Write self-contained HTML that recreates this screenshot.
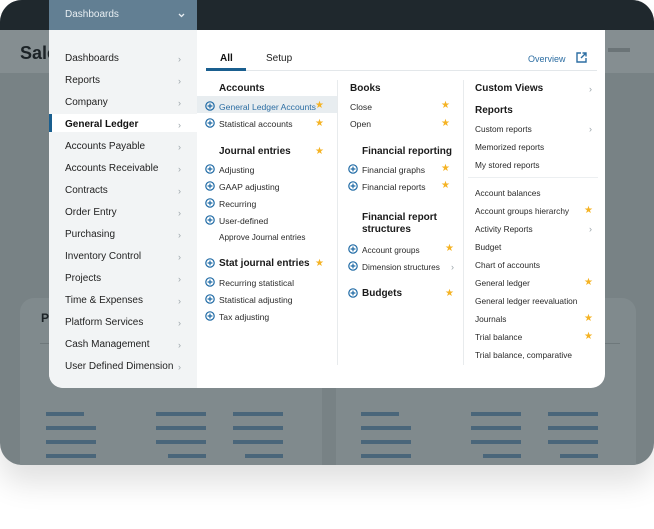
<!DOCTYPE html>
<html><head><style>
*{margin:0;padding:0;box-sizing:border-box}
body{width:654px;height:529px;background:#fff;font-family:"Liberation Sans",sans-serif;position:relative;overflow:hidden}
.wrap{position:absolute;left:0;top:0;width:654px;height:465px;border-radius:22px;background:#788285;overflow:hidden;box-shadow:0 18px 30px rgba(0,0,0,.12)}
.top{position:absolute;left:0;top:0;width:654px;height:30px;background:#1f282d}
.band{position:absolute;left:0;top:30px;width:654px;height:43px;background:#858e91}
.card{position:absolute;top:298px;height:180px;background:#808a8d;border-radius:14px}
.bar{position:absolute;height:4px;background:#4a667a}
.a{position:absolute;white-space:nowrap;line-height:1;margin-top:2px}
.nav{position:absolute;left:49px;top:30px;width:148px;height:358px;background:#f2f4f5;border-bottom-left-radius:14px}
.menu{position:absolute;left:49px;top:30px;width:556px;height:358px;background:#fff;border-radius:0 0 14px 14px;overflow:hidden}
.n{font-size:10px;color:#222;left:65px}
.ch{position:absolute;left:178px;font-size:9px;color:#9aa3a8;margin-top:2px}
.h{font-weight:bold;font-size:10px;color:#1a1a1a}
.i{font-size:8.6px;color:#2a2a2a}
.s{position:absolute;font-size:10px;color:#f5b324;line-height:1;margin-top:3px}
.p{position:absolute;width:10px;height:10px;margin-top:1px}
</style></head><body>
<div class="wrap">
<div class="top"></div>
<div class="band"></div>
<div class="a" style="left:20px;top:42px;font-size:18px;font-weight:bold;color:#1c2327">Sales</div>
<div style="position:absolute;left:608px;top:48px;width:22px;height:4px;background:#6b7477"></div>
<div class="card" style="left:20px;width:302px"></div>
<div class="card" style="left:336px;width:300px"></div>
<div class="a" style="left:41px;top:310px;font-size:12px;font-weight:bold;color:#1c2327">P</div>
<div style="position:absolute;left:40px;top:343px;width:580px;height:1px;background:#6e787b"></div>
<div class="bar" style="left:46px;top:412px;width:38px"></div><div class="bar" style="left:156px;top:412px;width:50px"></div><div class="bar" style="left:233px;top:412px;width:50px"></div>
<div class="bar" style="left:46px;top:426px;width:50px"></div><div class="bar" style="left:156px;top:426px;width:50px"></div><div class="bar" style="left:233px;top:426px;width:50px"></div>
<div class="bar" style="left:46px;top:440px;width:50px"></div><div class="bar" style="left:156px;top:440px;width:50px"></div><div class="bar" style="left:233px;top:440px;width:50px"></div>
<div class="bar" style="left:46px;top:454px;width:50px"></div><div class="bar" style="left:168px;top:454px;width:38px"></div><div class="bar" style="left:245px;top:454px;width:38px"></div>
<div class="bar" style="left:361px;top:412px;width:38px"></div><div class="bar" style="left:471px;top:412px;width:50px"></div><div class="bar" style="left:548px;top:412px;width:50px"></div>
<div class="bar" style="left:361px;top:426px;width:50px"></div><div class="bar" style="left:471px;top:426px;width:50px"></div><div class="bar" style="left:548px;top:426px;width:50px"></div>
<div class="bar" style="left:361px;top:440px;width:50px"></div><div class="bar" style="left:471px;top:440px;width:50px"></div><div class="bar" style="left:548px;top:440px;width:50px"></div>
<div class="bar" style="left:361px;top:454px;width:50px"></div><div class="bar" style="left:483px;top:454px;width:38px"></div><div class="bar" style="left:560px;top:454px;width:38px"></div>
</div>

<div style="position:absolute;left:49px;top:0;width:148px;height:30px;background:#627f93"></div>
<div class="a" style="left:65px;top:8px;font-size:10px;color:#e8eef2">Dashboards</div>
<svg style="position:absolute;left:178px;top:13px" width="7" height="5" viewBox="0 0 7 5"><path d="M1 1l2.5 2.5L6 1" stroke="#e8eef2" stroke-width="1.3" fill="none"/></svg>

<div class="menu"></div>
<div class="nav"></div>
<div style="position:absolute;left:49px;top:114px;width:148px;height:18px;background:#fff"></div>
<div style="position:absolute;left:49px;top:114px;width:3px;height:18px;background:#1a5f8f"></div>
<div class="a n" style="top:52px">Dashboards</div><div class="ch" style="top:52px">›</div>
<div class="a n" style="top:74px">Reports</div><div class="ch" style="top:74px">›</div>
<div class="a n" style="top:96px">Company</div><div class="ch" style="top:96px">›</div>
<div class="a n" style="top:118px;font-weight:bold;color:#111">General Ledger</div><div class="ch" style="top:118px">›</div>
<div class="a n" style="top:140px">Accounts Payable</div><div class="ch" style="top:140px">›</div>
<div class="a n" style="top:162px">Accounts Receivable</div><div class="ch" style="top:162px">›</div>
<div class="a n" style="top:184px">Contracts</div><div class="ch" style="top:184px">›</div>
<div class="a n" style="top:206px">Order Entry</div><div class="ch" style="top:206px">›</div>
<div class="a n" style="top:228px">Purchasing</div><div class="ch" style="top:228px">›</div>
<div class="a n" style="top:250px">Inventory Control</div><div class="ch" style="top:250px">›</div>
<div class="a n" style="top:272px">Projects</div><div class="ch" style="top:272px">›</div>
<div class="a n" style="top:294px">Time &amp; Expenses</div><div class="ch" style="top:294px">›</div>
<div class="a n" style="top:316px">Platform Services</div><div class="ch" style="top:316px">›</div>
<div class="a n" style="top:338px">Cash Management</div><div class="ch" style="top:338px">›</div>
<div class="a n" style="top:360px">User Defined Dimension</div><div class="ch" style="top:360px">›</div>

<div class="a" style="left:220px;top:52px;font-size:10px;font-weight:bold;color:#111">All</div>
<div class="a" style="left:266px;top:52px;font-size:10px;color:#222">Setup</div>
<div style="position:absolute;left:206px;top:70px;width:391px;height:1px;background:#e3e7ea"></div>
<div style="position:absolute;left:206px;top:68px;width:40px;height:3px;background:#1a5f8f"></div>
<div class="a" style="left:528px;top:53px;font-size:9px;color:#2d6ea3">Overview</div>
<svg style="position:absolute;left:576px;top:52px" width="11" height="11" viewBox="0 0 11 11"><path d="M5 1H1v9h9V6M6.5 1H10v3.5M10 1L5 6" stroke="#2d6ea3" stroke-width="1.4" fill="none"/></svg>

<div style="position:absolute;left:337px;top:80px;width:1px;height:285px;background:#e8ebed"></div>
<div style="position:absolute;left:463px;top:80px;width:1px;height:285px;background:#e8ebed"></div>
<div style="position:absolute;left:197px;top:96px;width:140px;height:17px;background:#e8edf0"></div>

<svg width="0" height="0" style="position:absolute"><defs><symbol id="pl" viewBox="0 0 10 10"><circle cx="5" cy="5" r="4.2" stroke="#1f6aa5" stroke-width="1.2" fill="none"/><path d="M5 2.6v4.8M2.6 5h4.8" stroke="#1f6aa5" stroke-width="1.2"/></symbol></defs></svg>

<div class="a h" style="left:219px;top:82px">Accounts</div>
<svg class="p" style="left:205px;top:100px"><use href="#pl"/></svg><div class="a i" style="left:219px;top:101px;color:#2d6ea3">General Ledger Accounts</div><div class="s" style="left:315px;top:98px">★</div>
<svg class="p" style="left:205px;top:117px"><use href="#pl"/></svg><div class="a i" style="left:219px;top:118px">Statistical accounts</div><div class="s" style="left:315px;top:116px">★</div>
<div class="a h" style="left:219px;top:145px">Journal entries</div><div class="s" style="left:315px;top:144px">★</div>
<svg class="p" style="left:205px;top:163px"><use href="#pl"/></svg><div class="a i" style="left:219px;top:164px">Adjusting</div>
<svg class="p" style="left:205px;top:180px"><use href="#pl"/></svg><div class="a i" style="left:219px;top:181px">GAAP adjusting</div>
<svg class="p" style="left:205px;top:197px"><use href="#pl"/></svg><div class="a i" style="left:219px;top:198px">Recurring</div>
<svg class="p" style="left:205px;top:214px"><use href="#pl"/></svg><div class="a i" style="left:219px;top:215px">User-defined</div>
<div class="a i" style="left:219px;top:232px;font-size:8.2px">Approve Journal entries</div>
<svg class="p" style="left:205px;top:257px"><use href="#pl"/></svg><div class="a h" style="left:219px;top:257px">Stat journal entries</div><div class="s" style="left:315px;top:256px">★</div>
<svg class="p" style="left:205px;top:276px"><use href="#pl"/></svg><div class="a i" style="left:219px;top:277px">Recurring statistical</div>
<svg class="p" style="left:205px;top:293px"><use href="#pl"/></svg><div class="a i" style="left:219px;top:294px">Statistical adjusting</div>
<svg class="p" style="left:205px;top:310px"><use href="#pl"/></svg><div class="a i" style="left:219px;top:311px">Tax adjusting</div>

<div class="a h" style="left:350px;top:82px">Books</div>
<div class="a i" style="left:350px;top:101px">Close</div><div class="s" style="left:441px;top:98px">★</div>
<div class="a i" style="left:350px;top:118px">Open</div><div class="s" style="left:441px;top:116px">★</div>
<div class="a h" style="left:362px;top:145px">Financial reporting</div>
<svg class="p" style="left:348px;top:163px"><use href="#pl"/></svg><div class="a i" style="left:362px;top:164px">Financial graphs</div><div class="s" style="left:441px;top:161px">★</div>
<svg class="p" style="left:348px;top:180px"><use href="#pl"/></svg><div class="a i" style="left:362px;top:181px">Financial reports</div><div class="s" style="left:441px;top:178px">★</div>
<div class="a h" style="left:362px;top:211px">Financial report</div>
<div class="a h" style="left:362px;top:223px">structures</div>
<svg class="p" style="left:348px;top:243px"><use href="#pl"/></svg><div class="a i" style="left:362px;top:244px;font-size:8.3px">Account groups</div><div class="s" style="left:445px;top:241px">★</div>
<svg class="p" style="left:348px;top:260px"><use href="#pl"/></svg><div class="a i" style="left:362px;top:261px;font-size:8.3px">Dimension structures</div><div class="ch" style="left:451px;top:260px">›</div>
<svg class="p" style="left:348px;top:287px"><use href="#pl"/></svg><div class="a h" style="left:362px;top:287px">Budgets</div><div class="s" style="left:445px;top:286px">★</div>

<div class="a h" style="left:475px;top:82px">Custom Views</div><div class="ch" style="left:589px;top:82px">›</div>
<div class="a h" style="left:475px;top:104px">Reports</div>
<div class="a i" style="left:475px;top:123px;font-size:8.3px">Custom reports</div><div class="ch" style="left:589px;top:122px">›</div>
<div class="a i" style="left:475px;top:141px;font-size:8.3px">Memorized reports</div>
<div class="a i" style="left:475px;top:159px;font-size:8.3px">My stored reports</div>
<div style="position:absolute;left:468px;top:177px;width:130px;height:1px;background:#eceff1"></div>
<div class="a i" style="left:475px;top:187px;font-size:8.3px">Account balances</div>
<div class="a i" style="left:475px;top:205px;font-size:8.3px">Account groups hierarchy</div><div class="s" style="left:584px;top:203px">★</div>
<div class="a i" style="left:475px;top:223px;font-size:8.3px">Activity Reports</div><div class="ch" style="left:589px;top:222px">›</div>
<div class="a i" style="left:475px;top:241px;font-size:8.3px">Budget</div>
<div class="a i" style="left:475px;top:259px;font-size:8.3px">Chart of accounts</div>
<div class="a i" style="left:475px;top:277px;font-size:8.3px">General ledger</div><div class="s" style="left:584px;top:275px">★</div>
<div class="a i" style="left:475px;top:295px;font-size:8.3px">General ledger reevaluation</div>
<div class="a i" style="left:475px;top:313px;font-size:8.3px">Journals</div><div class="s" style="left:584px;top:311px">★</div>
<div class="a i" style="left:475px;top:331px;font-size:8.3px">Trial balance</div><div class="s" style="left:584px;top:329px">★</div>
<div class="a i" style="left:475px;top:349px;font-size:8.3px">Trial balance, comparative</div>
</body></html>
